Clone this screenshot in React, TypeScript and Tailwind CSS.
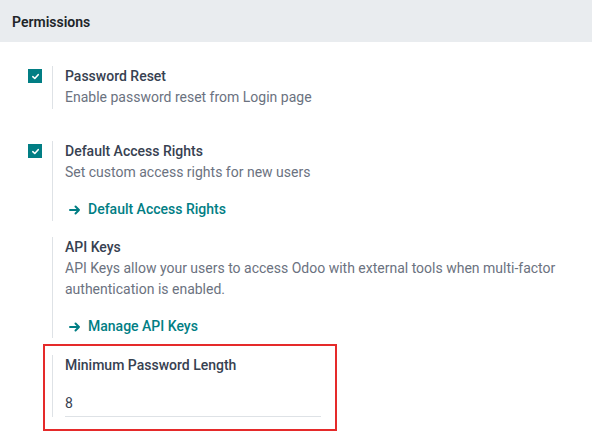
const font = { fontFamily: 'Roboto, "Noto Sans", sans-serif' };

type Setting = {
  title: string;
  desc?: string;
  checked?: boolean;
  link?: string;
};

function Checkbox() {
  return (
    <div className="w-[14px] h-[14px] bg-[#017e84] flex items-center justify-center mt-[3px]">
      <svg width="9" height="9" viewBox="0 0 10 10" fill="none">
        <path d="M2 5.2 L4.2 7.2 L8 3" stroke="white" strokeWidth="1.8" strokeLinecap="round" strokeLinejoin="round" />
      </svg>
    </div>
  );
}

function Arrow() {
  return (
    <svg width="12" height="12" viewBox="0 0 12 12" fill="none" className="shrink-0">
      <path d="M1 6 H10 M6.5 2.5 L10 6 L6.5 9.5" stroke="#017e84" strokeWidth="2" strokeLinecap="round" strokeLinejoin="round" />
    </svg>
  );
}

function SettingBox({ title, desc, checked, link }: Setting) {
  return (
    <div className="flex">
      <div className="w-[24px] shrink-0">{checked && <Checkbox />}</div>
      <div className="border-l border-[#dee2e6] pl-[12px] pr-4 flex-1 pb-[1px]">
        <div className="text-[14px] leading-[21px] font-medium text-[#374151]">{title}</div>
        {desc && <div className="text-[14px] leading-[21px] text-[#6b7280]">{desc}</div>}
        {link && (
          <div className="mt-4 flex items-center gap-[7px] pl-[4px] text-[14px] leading-[21px] font-medium text-[#017e84]">
            <Arrow />
            <span>{link}</span>
          </div>
        )}
      </div>
    </div>
  );
}

export default function App() {
  return (
    <div className="w-[592px] h-[437px] bg-white overflow-hidden" style={font}>
      <div className="h-[42px] bg-[#e9ecef] px-3 flex items-center">
        <h2 className="text-[14px] font-semibold text-[#212529] leading-none pt-[1px]">Permissions</h2>
      </div>

      <div className="pl-[28px] pt-[24px] flex flex-col">
        <SettingBox checked title="Password Reset" desc="Enable password reset from Login page" />
        <div className="h-[32px]" />
        <SettingBox checked title="Default Access Rights" desc="Set custom access rights for new users" link="Default Access Rights" />
        <div className="h-[16px]" />
        <SettingBox
          title="API Keys"
          desc="API Keys allow your users to access Odoo with external tools when multi-factor authentication is enabled."
          link="Manage API Keys"
        />

        <div className="ml-[15px] mt-[6px] w-[294px] border-2 border-[#e52a2a] pt-[9px] pb-[12px] pl-[7px]">
          <div className="border-l border-[#dee2e6] pl-[12px]">
            <div className="text-[14px] leading-[21px] font-medium text-[#374151]">Minimum Password Length</div>
            <div className="mt-[17px] w-[256px] border-b border-[#dee2e6] text-[14px] leading-[21px] text-[#374151] pb-[2px]">8</div>
          </div>
        </div>
      </div>
    </div>
  );
}
